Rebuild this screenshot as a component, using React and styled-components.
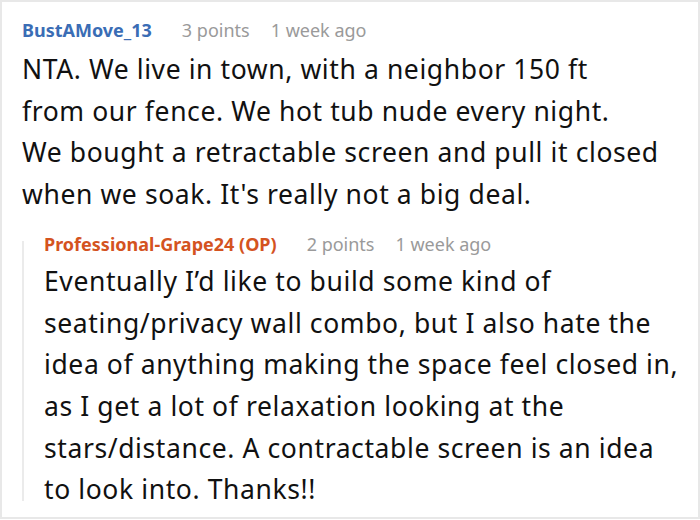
import styled, { createGlobalStyle } from "styled-components";

const Global = createGlobalStyle`
  html, body {
    margin: 0;
    padding: 0;
    background: #ffffff;
  }
  body {
    font-family: "Noto Sans", "Open Sans", sans-serif;
  }
`;

// 전체 카드
const Frame = styled.div`
  box-sizing: border-box;
  width: 700px;
  height: 519px;
  border: 2px solid #e8e8e8;
  background: #ffffff;
  overflow: hidden;
  padding: 15px 0 0 20px;
`;

const Comment = styled.div`
  display: flex;
  flex-direction: column;
`;

// 작성자 / 점수 / 시간 줄
const Meta = styled.div`
  display: flex;
  align-items: baseline;
  height: 26px;
  line-height: 26px;
  font-size: 18px;
  white-space: nowrap;
`;

const Author = styled.span`
  font-weight: 700;
  color: ${({ $op }) => ($op ? "#d4531f" : "#3a6db5")};
  margin-right: 30px;
`;

const Points = styled.span`
  color: #9a9a9a;
  margin-right: 21px;
`;

const Age = styled.span`
  color: #9a9a9a;
`;

const Body = styled.p`
  margin: ${({ $gap }) => $gap} 0 0;
  font-size: 26.5px;
  letter-spacing: 0.6px;
  line-height: 41.7px;
  color: #111111;
  white-space: nowrap;
`;

// 답글 영역 (왼쪽 스레드 선)
const Reply = styled.div`
  position: relative;
  margin-top: 15px;
  padding-left: 22px;
  &::before {
    content: "";
    position: absolute;
    left: 0;
    top: 10px;
    bottom: 10px;
    width: 2px;
    background: #ebebeb;
  }
`;

const App = () => {
  return (
    <>
      <Global />
      <Frame>
        <Comment>
          <Meta>
            <Author>BustAMove_13</Author>
            <Points>3 points</Points>
            <Age>1 week ago</Age>
          </Meta>
          <Body $gap="6px">
            NTA. We live in town, with a neighbor 150 ft
            <br />
            from our fence. We hot tub nude every night.
            <br />
            We bought a retractable screen and pull it closed
            <br />
            when we soak. It's really not a big deal.
          </Body>
        </Comment>
        <Reply>
          <Comment>
            <Meta>
              <Author $op>Professional-Grape24 (OP)</Author>
              <Points>2 points</Points>
              <Age>1 week ago</Age>
            </Meta>
            <Body $gap="4px">
              Eventually I’d like to build some kind of
              <br />
              seating/privacy wall combo, but I also hate the
              <br />
              idea of anything making the space feel closed in,
              <br />
              as I get a lot of relaxation looking at the
              <br />
              stars/distance. A contractable screen is an idea
              <br />
              to look into. Thanks!!
            </Body>
          </Comment>
        </Reply>
      </Frame>
    </>
  );
};

export default App;
